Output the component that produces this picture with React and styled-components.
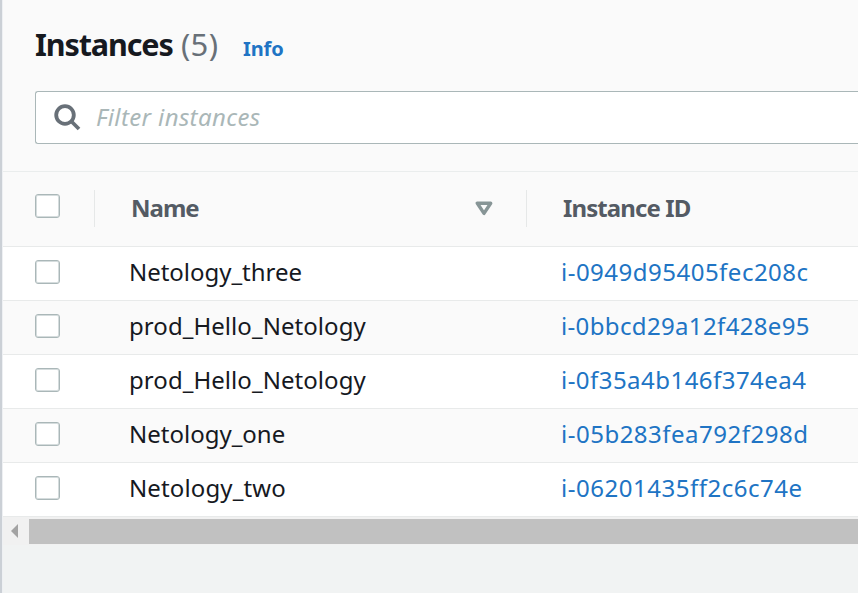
import React from "react";
import styled, { createGlobalStyle } from "styled-components";

const Global = createGlobalStyle`
  *, *::before, *::after { box-sizing: border-box; }
  body {
    margin: 0;
    overflow: hidden;
    background: #f2f3f3;
    color: #16191f;
    font-family: "Noto Sans", "Open Sans", sans-serif;
  }
`;

const Page = styled.main`
  width: 100vw;
  height: 100vh;
  padding-left: 1px;
  overflow: hidden;
  background: linear-gradient(to right, #eef0f3 1px, #f1f3f3 1px);
  border-left: 2px solid #cbd0d6;
`;

const Toolbar = styled.header`
  height: 171px;
  padding: 21px 0 0 32px;
  background: #fafafa;
`;

const TitleRow = styled.div`
  display: flex;
  align-items: baseline;
  height: 70px;
  line-height: 46px;
`;

const Title = styled.h1`
  margin: 0;
  width: 138px;
  font-size: 30.5px;
  font-weight: 700;
  letter-spacing: -1.1px;
  white-space: nowrap;
`;

const Count = styled.span`
  width: 47px;
  margin-left: 8px;
  font-size: 31px;
  color: #687078;
  letter-spacing: 0.3px;
`;

const InfoLink = styled.a`
  margin-left: 15px;
  font-size: 20px;
  font-weight: 700;
  color: #2074c4;
  letter-spacing: -0.1px;
`;

const SearchBox = styled.div`
  display: flex;
  align-items: center;
  height: 53px;
  padding-left: 18px;
  background: #fff;
  border: 1px solid #aab7b8;
  border-right: 0;
  border-radius: 3px 0 0 3px;
`;

const Placeholder = styled.span`
  margin: 0 0 2px 15px;
  font-size: 24px;
  font-style: italic;
  line-height: 48px;
  color: #aab7b8;
  letter-spacing: 0.36px;
`;

const Row = styled.div`
  display: grid;
  grid-template-columns: 91px 432px 1fr;
  align-items: center;
  height: ${(p) => (p.$head ? 76 : 54)}px;
  background: ${(p) => (p.$shaded ? "#fafafa" : "#fff")};
  border-top: ${(p) => (p.$head ? 1 : 0)}px solid #eaeded;
  border-bottom: 1px solid #e8eaea;
`;

const Checkbox = styled.span`
  width: 25px;
  height: 24px;
  margin: 0 0 ${(p) => (p.$head ? 6 : 3)}px 32px;
  background: #fff;
  border: 1px solid #aab7b8;
  border-radius: 3px;
  box-shadow: inset 0 0 0 1px #d5dcdd;
`;

const HeadCell = styled.div`
  display: flex;
  align-items: center;
  justify-content: space-between;
  height: 37px;
  padding: 0 33px 0 36px;
  margin-bottom: 1px;
  border-left: 1px solid #e6e8e8;
  font-size: 24px;
  font-weight: 700;
  color: #545b64;
  letter-spacing: ${(p) => p.$track}px;
`;

const HeadLabel = styled.span`
  padding-bottom: 1px;
  line-height: 34px;
`;

const Cell = styled.div`
  padding: 0 0 4px 35px;
  font-size: 24px;
  line-height: 48px;
  white-space: nowrap;
  color: ${(p) => (p.$link ? "#2074c4" : "#16191f")};
  letter-spacing: ${(p) => p.$track}px;
`;

const Scrollbar = styled.div`
  display: flex;
  align-items: center;
  height: 28px;
  background: #f1f1f1;
`;

const ScrollArrow = styled.svg`
  flex: none;
  width: 26px;
  height: 24px;
`;

const ScrollThumb = styled.div`
  flex: 1;
  height: 25px;
  background: #c1c1c1;
`;

const rows = [
  { name: "Netology_three", track: -0.03, id: "i-0949d95405fec208c", idTrack: 0.49 },
  { name: "prod_Hello_Netology", track: 0.06, id: "i-0bbcd29a12f428e95", idTrack: 0.35 },
  { name: "prod_Hello_Netology", track: 0.06, id: "i-0f35a4b146f374ea4", idTrack: 0.46 },
  { name: "Netology_one", track: 0, id: "i-05b283fea792f298d", idTrack: 0.5 },
  { name: "Netology_two", track: 0.12, id: "i-06201435ff2c6c74e", idTrack: 0.52 },
];

export default function App() {
  return (
    <>
      <Global />
      <Page>
        <Toolbar>
          <TitleRow>
            <Title>Instances</Title>
            <Count>(5)</Count>
            <InfoLink>Info</InfoLink>
          </TitleRow>
          <SearchBox>
            <svg width="27" height="27" viewBox="0 0 27 27" fill="none" stroke="#687078">
              <circle cx="11" cy="11" r="8.8" strokeWidth="3.8" />
              <path d="M17 17L25 25" strokeWidth="3.8" />
            </svg>
            <Placeholder>Filter instances</Placeholder>
          </SearchBox>
        </Toolbar>
        <Row $head $shaded>
          <Checkbox $head />
          <HeadCell $track={-1}>
            <HeadLabel>Name</HeadLabel>
            <svg width="18" height="15" viewBox="0 0 18 15" fill="none">
              <path d="M2.3 2.2H15.7L9 12.4Z" stroke="#879596" strokeWidth="3.4" strokeLinejoin="round" />
            </svg>
          </HeadCell>
          <HeadCell $track={-0.9}>
            <HeadLabel>Instance ID</HeadLabel>
          </HeadCell>
        </Row>
        {rows.map((r, i) => (
          <Row key={r.id} $shaded={i % 2 === 1}>
            <Checkbox />
            <Cell $track={r.track}>{r.name}</Cell>
            <Cell $link $track={r.idTrack}>{r.id}</Cell>
          </Row>
        ))}
        <Scrollbar>
          <ScrollArrow viewBox="0 0 26 24">
            <path d="M8 12L15 5V19Z" fill="#a3a3a3" />
          </ScrollArrow>
          <ScrollThumb />
        </Scrollbar>
      </Page>
    </>
  );
}
